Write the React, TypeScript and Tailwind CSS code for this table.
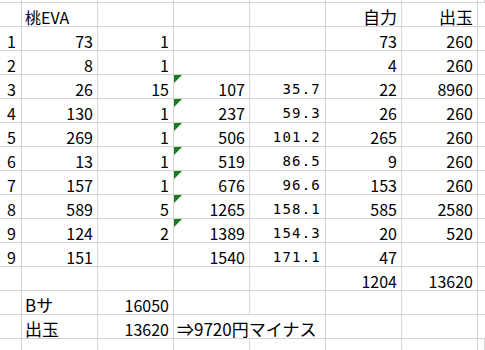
import React from 'react';

type Cell = { v: string; align?: 'l' | 'r'; mono?: boolean; flag?: boolean; span?: number; jp?: boolean };

const r = (v: string, extra: Partial<Cell> = {}): Cell => ({ v, align: 'r', ...extra });
const l = (v: string, extra: Partial<Cell> = {}): Cell => ({ v, align: 'l', ...extra });
const e: Cell = { v: '' };

const rows: Cell[][] = [
  [e, l('桃EVA'), e, e, e, r('自力', { jp: true }), r('出玉', { jp: true })],
  [r('1'), r('73'), r('1'), e, e, r('73'), r('260')],
  [r('2'), r('8'), r('1'), e, e, r('4'), r('260')],
  [r('3'), r('26'), r('15'), r('107', { flag: true }), r('35.7', { mono: true }), r('22'), r('8960')],
  [r('4'), r('130'), r('1'), r('237', { flag: true }), r('59.3', { mono: true }), r('26'), r('260')],
  [r('5'), r('269'), r('1'), r('506', { flag: true }), r('101.2', { mono: true }), r('265'), r('260')],
  [r('6'), r('13'), r('1'), r('519', { flag: true }), r('86.5', { mono: true }), r('9'), r('260')],
  [r('7'), r('157'), r('1'), r('676', { flag: true }), r('96.6', { mono: true }), r('153'), r('260')],
  [r('8'), r('589'), r('5'), r('1265', { flag: true }), r('158.1', { mono: true }), r('585'), r('2580')],
  [r('9'), r('124'), r('2'), r('1389', { flag: true }), r('154.3', { mono: true }), r('20'), r('520')],
  [r('9'), r('151'), e, r('1540'), r('171.1', { mono: true }), r('47'), e],
  [e, e, e, e, e, r('1204'), r('13620')],
  [e, l('Bサ', { jp: true }), r('16050'), e, e, e, e],
  [e, l('出玉', { jp: true }), r('13620'), l('⇒9720円マイナス', { span: 2, jp: true }), e, e],
];

const Flag = () => (
  <svg className="absolute left-0 top-0" width="8" height="8" viewBox="0 0 8 8">
    <polygon points="0,0 8,0 0,8" fill="#1b7a1f" />
  </svg>
);

const CellView: React.FC<{ c: Cell; first: boolean }> = ({ c, first }) => {
  const right = c.align !== 'l';
  return (
    <div
      className={`relative flex items-end h-[24px] border-r border-b border-[#d4d4d4] whitespace-nowrap overflow-visible ${
        right ? 'justify-end' : 'justify-start pl-[3px]'
      } ${right ? (first ? 'pr-[5px]' : 'pr-1') : ''} ${c.span === 2 ? 'col-span-2' : ''}`}
    >
      {c.flag && <Flag />}
      {c.mono ? (
        <span className="leading-4 text-[14px] tracking-[1.2px] font-['DejaVu_Sans_Mono',monospace] pb-[1px]">
          {c.v}
        </span>
      ) : (
        <span className={`leading-4 pb-[1px] ${c.jp ? 'text-[17px]' : 'text-[16px]'}`}>{c.v}</span>
      )}
    </div>
  );
};

export default function App() {
  return (
    <div className="w-[485px] h-[350px] overflow-hidden bg-white text-black font-['Noto_Sans_CJK_JP','Noto_Sans',sans-serif]">
      <div className="grid grid-cols-[22px_repeat(6,76px)_1fr]">
        {Array.from({ length: 8 }).map((_, i) => (
          <div key={`t${i}`} className="h-[3px] border-r border-b border-[#d4d4d4]" />
        ))}
        {rows.map((row, ri) => (
          <React.Fragment key={ri}>
            {row.map((c, ci) => (
              <CellView key={ci} c={c} first={ci === 0} />
            ))}
            <div className="h-[24px] border-b border-[#d4d4d4]" />
          </React.Fragment>
        ))}
        {Array.from({ length: 8 }).map((_, i) => (
          <div key={`b${i}`} className="h-[11px] border-r border-[#d4d4d4]" />
        ))}
      </div>
    </div>
  );
}
